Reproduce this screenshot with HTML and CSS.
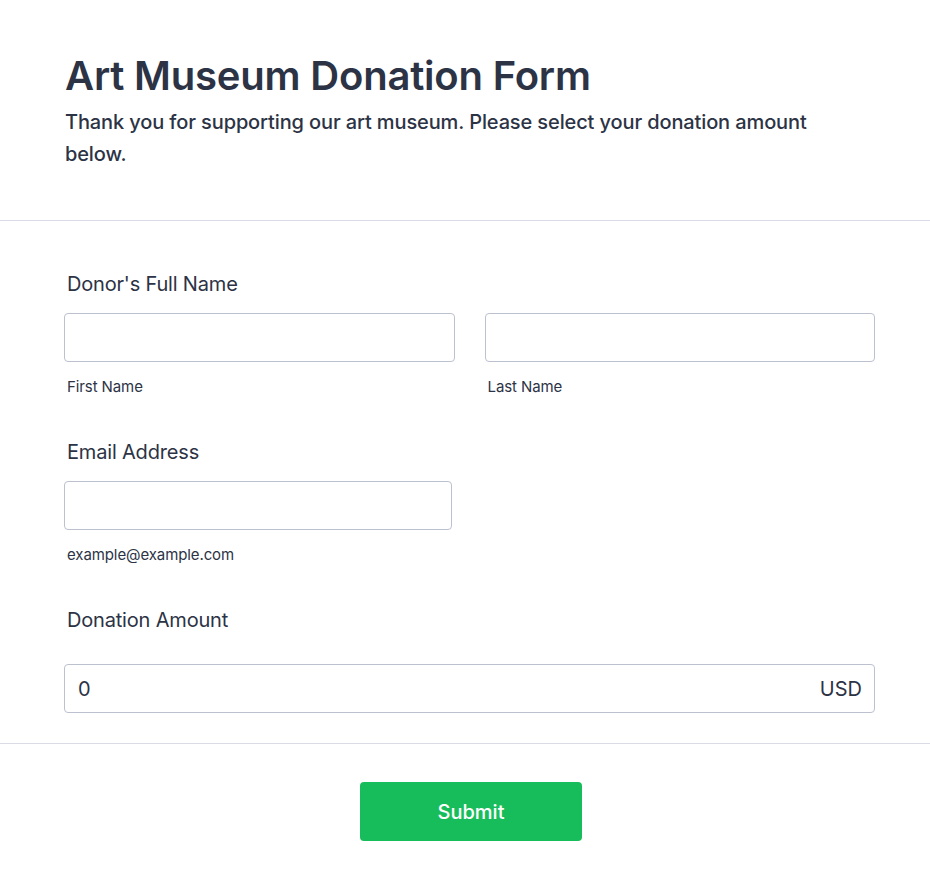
FILE: index.html
```html
<!DOCTYPE html>
<html lang="en">
<head>
<meta charset="utf-8">
<title>Art Museum Donation Form</title>
<link rel="stylesheet" href="styles.css">
</head>
<body>
<header class="header">
  <h1 class="title">Art Museum Donation Form</h1>
  <p class="subtitle">Thank you for supporting our art museum. Please select your donation amount below.</p>
</header>
<main class="form">
  <div class="field">
    <label class="label">Donor's Full Name</label>
    <div class="row">
      <div class="col">
        <input class="input" type="text">
        <span class="sublabel">First Name</span>
      </div>
      <div class="col">
        <input class="input" type="text">
        <span class="sublabel">Last Name</span>
      </div>
    </div>
  </div>
  <div class="field">
    <label class="label">Email Address</label>
    <div class="row">
      <div class="col email">
        <input class="input" type="text">
        <span class="sublabel">example@example.com</span>
      </div>
    </div>
  </div>
  <div class="field amount-field">
    <label class="label">Donation Amount</label>
    <div class="amount">
      <span class="amount-value">0</span>
      <span class="amount-cur">USD</span>
    </div>
  </div>
</main>
<footer class="footer">
  <button class="submit" type="button">Submit</button>
</footer>
</body>
</html>
```

FILE: styles.css
```css
* { box-sizing: border-box; }
html, body { margin: 0; padding: 0; background: #fff; }
body {
  font-family: Inter, "Noto Sans", sans-serif;
  color: #2c3345;
}
.header {
  padding: 52px 55px 50px 65px;
  border-bottom: 1px solid #dadbe6;
}
.title {
  margin: 0;
  font-size: 40px;
  line-height: 48px;
  font-weight: 600;
  letter-spacing: -0.2px;
}
.subtitle {
  margin: 6px 0 0;
  max-width: 790px;
  font-size: 20px;
  line-height: 32px;
  font-weight: 500;
  letter-spacing: -0.12px;
}
.form {
  padding: 51px 55px 30px 64px;
  border-bottom: 1px solid #dadbe6;
  display: flex;
  flex-direction: column;
  gap: 43px;
}
.field { display: flex; flex-direction: column; }
.label {
  padding-left: 3px;
  font-size: 20px;
  line-height: 24px;
  font-weight: 400;
  letter-spacing: -0.18px;
}
.row { display: flex; gap: 30px; margin-top: 17px; }
.col { flex: 1; display: flex; flex-direction: column; }
.col.email { flex: 0 0 388px; }
.input {
  height: 49px;
  width: 100%;
  border: 1px solid #bcc1cf;
  border-radius: 4px;
  background: #fff;
  font: inherit;
}
.sublabel {
  margin-top: 15px;
  padding-left: 3px;
  font-size: 15px;
  line-height: 20px;
  letter-spacing: -0.1px;
}
.amount {
  margin-top: 32px;
  height: 49px;
  border: 1px solid #bcc1cf;
  border-radius: 4px;
  display: flex;
  align-items: center;
  justify-content: space-between;
  padding: 0 12px 0 13px;
  font-size: 20px;
}
.footer {
  display: flex;
  justify-content: center;
  padding: 38px 0 40px 12px;
}
.submit {
  width: 222px;
  height: 59px;
  border: none;
  border-radius: 4px;
  background: #18bd5b;
  color: #fff;
  font-family: inherit;
  font-size: 20px;
  font-weight: 500;
}
```
